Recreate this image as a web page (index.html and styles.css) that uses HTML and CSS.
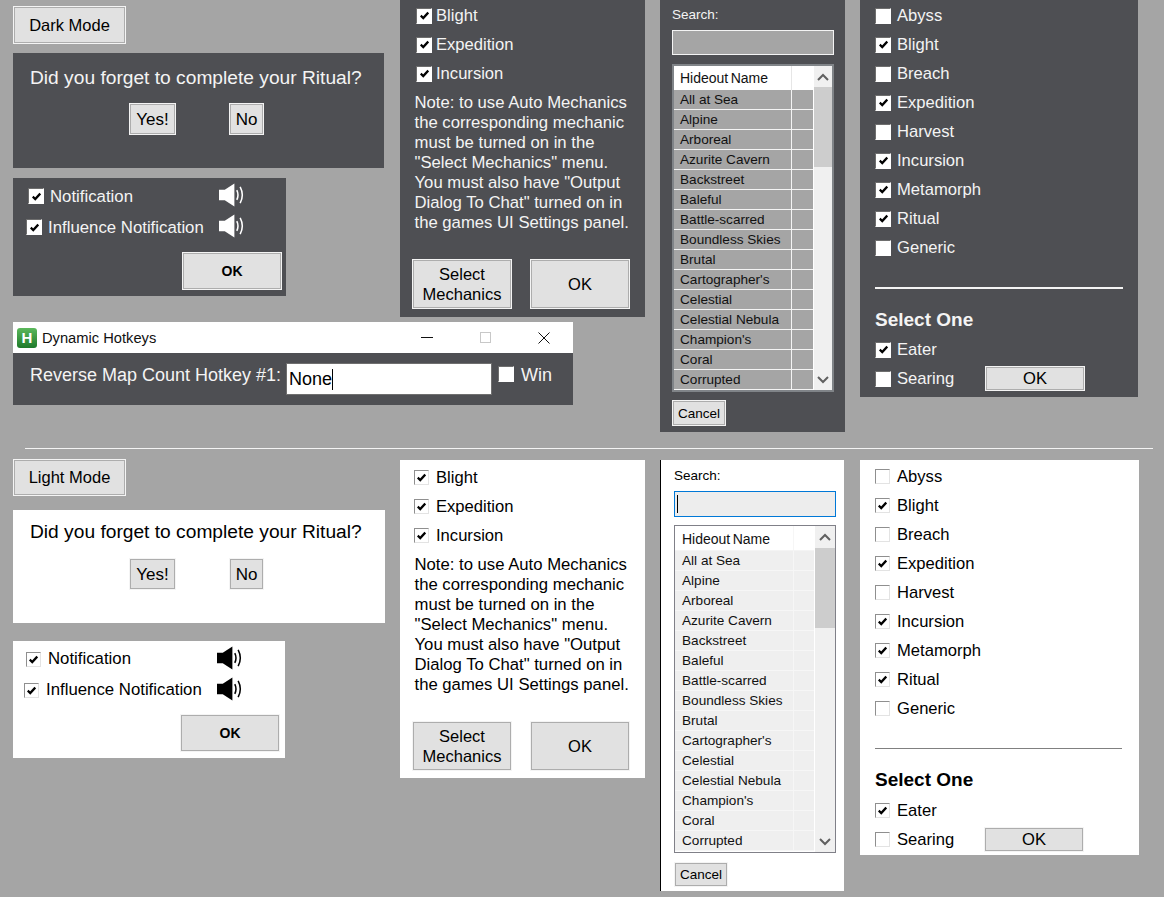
FILE: index.html
```html
<!DOCTYPE html>
<html lang="en">
<head>
<meta charset="utf-8">
<title>Dark and Light Mode</title>
<link rel="stylesheet" href="styles.css">
</head>
<body>
<svg class="defs" width="0" height="0" aria-hidden="true">
  <symbol id="tick" viewBox="0 0 10 10"><path d="M0.800 5.200 L3.600 7.800 L9.200 1.800" fill="none" stroke="currentColor" stroke-width="2.600"/></symbol>
  <symbol id="spk" viewBox="0 0 26 24"><path d="M0 6.500H6L16 0V24L6 17.500H0Z" fill="currentColor"/><path d="M18.500 7Q21 12 18.500 17M22 3.500Q26.500 12 22 20.500" fill="none" stroke="currentColor" stroke-width="1.600"/></symbol>
  <symbol id="up" viewBox="0 0 12 8"><path d="M1 7L6 2L11 7" fill="none" stroke="currentColor" stroke-width="2"/></symbol>
  <symbol id="down" viewBox="0 0 12 8"><path d="M1 1L6 6L11 1" fill="none" stroke="currentColor" stroke-width="2"/></symbol>
</svg>

<!-- DARK THEME -->
<button class="btn mode mode-dark">Dark Mode</button>

<section class="win dark ritual ritual-dark">
  <p class="ritual-q">Did you forget to complete your Ritual?</p>
  <div class="ritual-btns"><button class="btn yes">Yes!</button><button class="btn no">No</button></div>
</section>

<section class="win dark notif notif-dark">
  <div class="notif-row"><span class="box on"><svg class="tk"><use href="#tick"/></svg></span><span class="lbl">Notification</span><svg class="spk"><use href="#spk"/></svg></div>
  <div class="notif-row second"><span class="box on"><svg class="tk"><use href="#tick"/></svg></span><span class="lbl">Influence Notification</span><svg class="spk"><use href="#spk"/></svg></div>
  <button class="btn notif-ok">OK</button>
</section>

<section class="win dark hotkeys">
  <header class="titlebar">
    <span class="app-ico">H</span><span class="title">Dynamic Hotkeys</span>
    <span class="ctl"><i class="min"></i></span>
    <span class="ctl"><i class="max"></i></span>
    <span class="ctl"><svg class="x" viewBox="0 0 12 12"><path d="M.5.5L11.500 11.500M11.500.5L.5 11.500" stroke="#111" stroke-width="1" fill="none"/></svg></span>
  </header>
  <div class="hk-body">
    <span class="hk-label">Reverse Map Count Hotkey #1:</span>
    <span class="hk-input">None<i class="caret"></i></span>
    <span class="box"></span><span class="hk-win">Win</span>
  </div>
</section>

<section class="win dark mech mech-dark">
  <div class="row"><span class="box on"><svg class="tk"><use href="#tick"/></svg></span>Blight</div>
  <div class="row"><span class="box on"><svg class="tk"><use href="#tick"/></svg></span>Expedition</div>
  <div class="row"><span class="box on"><svg class="tk"><use href="#tick"/></svg></span>Incursion</div>
  <p class="note">Note: to use Auto Mechanics<br>the corresponding mechanic<br>must be turned on in the<br>"Select Mechanics" menu.<br>You must also have "Output<br>Dialog To Chat" turned on in<br>the games UI Settings panel.</p>
  <div class="mech-btns"><button class="btn big">Select<br>Mechanics</button><button class="btn big">OK</button></div>
</section>

<section class="win dark hide hide-dark">
  <div class="s-label">Search:</div>
  <div class="s-input"></div>
  <div class="list">
    <div class="cols">
      <div class="lhead"><span class="c1">Hideout Name</span><span class="c2"></span></div>
      <div class="r"><span class="c1">All at Sea</span><span class="c2"></span></div>
      <div class="r"><span class="c1">Alpine</span><span class="c2"></span></div>
      <div class="r"><span class="c1">Arboreal</span><span class="c2"></span></div>
      <div class="r"><span class="c1">Azurite Cavern</span><span class="c2"></span></div>
      <div class="r"><span class="c1">Backstreet</span><span class="c2"></span></div>
      <div class="r"><span class="c1">Baleful</span><span class="c2"></span></div>
      <div class="r"><span class="c1">Battle-scarred</span><span class="c2"></span></div>
      <div class="r"><span class="c1">Boundless Skies</span><span class="c2"></span></div>
      <div class="r"><span class="c1">Brutal</span><span class="c2"></span></div>
      <div class="r"><span class="c1">Cartographer's</span><span class="c2"></span></div>
      <div class="r"><span class="c1">Celestial</span><span class="c2"></span></div>
      <div class="r"><span class="c1">Celestial Nebula</span><span class="c2"></span></div>
      <div class="r"><span class="c1">Champion's</span><span class="c2"></span></div>
      <div class="r"><span class="c1">Coral</span><span class="c2"></span></div>
      <div class="r"><span class="c1">Corrupted</span><span class="c2"></span></div>
    </div>
    <div class="sb"><span class="sb-arrow"><svg class="arr"><use href="#up"/></svg></span><span class="thumb"></span><span class="sb-fill"></span><span class="sb-arrow"><svg class="arr"><use href="#down"/></svg></span></div>
  </div>
  <button class="btn cancel">Cancel</button>
</section>

<section class="win dark sel sel-dark">
  <div class="row"><span class="box"></span>Abyss</div>
  <div class="row"><span class="box on"><svg class="tk"><use href="#tick"/></svg></span>Blight</div>
  <div class="row"><span class="box"></span>Breach</div>
  <div class="row"><span class="box on"><svg class="tk"><use href="#tick"/></svg></span>Expedition</div>
  <div class="row"><span class="box"></span>Harvest</div>
  <div class="row"><span class="box on"><svg class="tk"><use href="#tick"/></svg></span>Incursion</div>
  <div class="row"><span class="box on"><svg class="tk"><use href="#tick"/></svg></span>Metamorph</div>
  <div class="row"><span class="box on"><svg class="tk"><use href="#tick"/></svg></span>Ritual</div>
  <div class="row"><span class="box"></span>Generic</div>
  <hr class="sep">
  <div class="sel-head">Select One</div>
  <div class="row"><span class="box on"><svg class="tk"><use href="#tick"/></svg></span>Eater</div>
  <div class="row"><span class="box"></span><span class="sear">Searing</span><button class="btn sel-ok">OK</button></div>
</section>

<hr class="divider">

<!-- LIGHT THEME -->
<button class="btn mode mode-light">Light Mode</button>

<section class="win light ritual ritual-light">
  <p class="ritual-q">Did you forget to complete your Ritual?</p>
  <div class="ritual-btns"><button class="btn yes">Yes!</button><button class="btn no">No</button></div>
</section>

<section class="win light notif notif-light">
  <div class="notif-row"><span class="box on"><svg class="tk"><use href="#tick"/></svg></span><span class="lbl">Notification</span><svg class="spk"><use href="#spk"/></svg></div>
  <div class="notif-row second"><span class="box on"><svg class="tk"><use href="#tick"/></svg></span><span class="lbl">Influence Notification</span><svg class="spk"><use href="#spk"/></svg></div>
  <button class="btn notif-ok">OK</button>
</section>

<section class="win light mech mech-light">
  <div class="row"><span class="box on"><svg class="tk"><use href="#tick"/></svg></span>Blight</div>
  <div class="row"><span class="box on"><svg class="tk"><use href="#tick"/></svg></span>Expedition</div>
  <div class="row"><span class="box on"><svg class="tk"><use href="#tick"/></svg></span>Incursion</div>
  <p class="note">Note: to use Auto Mechanics<br>the corresponding mechanic<br>must be turned on in the<br>"Select Mechanics" menu.<br>You must also have "Output<br>Dialog To Chat" turned on in<br>the games UI Settings panel.</p>
  <div class="mech-btns"><button class="btn big">Select<br>Mechanics</button><button class="btn big">OK</button></div>
</section>

<section class="win light hide hide-light">
  <div class="s-label">Search:</div>
  <div class="s-input"><i class="caret"></i></div>
  <div class="list">
    <div class="cols">
      <div class="lhead"><span class="c1">Hideout Name</span><span class="c2"></span></div>
      <div class="r"><span class="c1">All at Sea</span><span class="c2"></span></div>
      <div class="r"><span class="c1">Alpine</span><span class="c2"></span></div>
      <div class="r"><span class="c1">Arboreal</span><span class="c2"></span></div>
      <div class="r"><span class="c1">Azurite Cavern</span><span class="c2"></span></div>
      <div class="r"><span class="c1">Backstreet</span><span class="c2"></span></div>
      <div class="r"><span class="c1">Baleful</span><span class="c2"></span></div>
      <div class="r"><span class="c1">Battle-scarred</span><span class="c2"></span></div>
      <div class="r"><span class="c1">Boundless Skies</span><span class="c2"></span></div>
      <div class="r"><span class="c1">Brutal</span><span class="c2"></span></div>
      <div class="r"><span class="c1">Cartographer's</span><span class="c2"></span></div>
      <div class="r"><span class="c1">Celestial</span><span class="c2"></span></div>
      <div class="r"><span class="c1">Celestial Nebula</span><span class="c2"></span></div>
      <div class="r"><span class="c1">Champion's</span><span class="c2"></span></div>
      <div class="r"><span class="c1">Coral</span><span class="c2"></span></div>
      <div class="r"><span class="c1">Corrupted</span><span class="c2"></span></div>
    </div>
    <div class="sb"><span class="sb-arrow"><svg class="arr"><use href="#up"/></svg></span><span class="thumb"></span><span class="sb-fill"></span><span class="sb-arrow"><svg class="arr"><use href="#down"/></svg></span></div>
  </div>
  <button class="btn cancel">Cancel</button>
</section>

<section class="win light sel sel-light">
  <div class="row"><span class="box"></span>Abyss</div>
  <div class="row"><span class="box on"><svg class="tk"><use href="#tick"/></svg></span>Blight</div>
  <div class="row"><span class="box"></span>Breach</div>
  <div class="row"><span class="box on"><svg class="tk"><use href="#tick"/></svg></span>Expedition</div>
  <div class="row"><span class="box"></span>Harvest</div>
  <div class="row"><span class="box on"><svg class="tk"><use href="#tick"/></svg></span>Incursion</div>
  <div class="row"><span class="box on"><svg class="tk"><use href="#tick"/></svg></span>Metamorph</div>
  <div class="row"><span class="box on"><svg class="tk"><use href="#tick"/></svg></span>Ritual</div>
  <div class="row"><span class="box"></span>Generic</div>
  <hr class="sep">
  <div class="sel-head">Select One</div>
  <div class="row"><span class="box on"><svg class="tk"><use href="#tick"/></svg></span>Eater</div>
  <div class="row"><span class="box"></span><span class="sear">Searing</span><button class="btn sel-ok">OK</button></div>
</section>
</body>
</html>
```

FILE: styles.css
```css
* { box-sizing: border-box; }
html, body { margin: 0; height: 100%; overflow: hidden; }
body {
  position: relative;
  width: 1164px;
  height: 897px;
  background: #a5a5a5;
  font-family: "Liberation Sans", Arial, sans-serif;
  font-size: 16px;
  color: #000;
}
.defs { position: absolute; }
p { margin: 0; }

/* free-floating windows on the canvas */
.win { position: absolute; }
.dark { background: #4e4f53; color: #f4f4f4; }
.light { background: #fff; color: #000; }

.ritual-dark { left: 13px; top: 53px; width: 371px; height: 115px; }
.ritual-light { left: 13px; top: 510px; width: 372px; height: 113px; }
.notif-dark { left: 13px; top: 178px; width: 273px; height: 118px; }
.notif-light { left: 13px; top: 641px; width: 272px; height: 117px; }
.hotkeys { left: 13px; top: 322px; width: 560px; height: 83px; }
.mech-dark { left: 400px; top: 0; width: 245px; height: 317px; padding-top: 1px; }
.mech-light { left: 400px; top: 460px; width: 245px; height: 318px; padding-top: 3px; }
.hide-dark { left: 660px; top: 0; width: 185px; height: 432px; padding: 5px 11px 0 12px; }
.hide-light { left: 660px; top: 460px; width: 184px; height: 431px; padding: 6px 7px 0 13px; border-left: 1px solid #000; }
.sel-dark { left: 860px; top: 0; width: 278px; height: 397px; padding-top: 1px; }
.sel-light { left: 860px; top: 460px; width: 279px; height: 395px; padding-top: 2px; }

/* buttons */
.btn {
  display: block;
  margin: 0;
  padding: 0;
  font: inherit;
  color: #000;
  background: #e1e1e1;
  border: 1px solid #f4f4f4;
  box-shadow: inset 0 0 0 1px #adadad;
}
.mode { position: absolute; left: 13px; width: 113px; font-size: 16.500px; }
.mode-dark { top: 6px; height: 38px; }
.mode-light { top: 459px; height: 37px; }

/* checkbox */
.box {
  flex: none;
  display: flex;
  align-items: center;
  justify-content: center;
  width: 15px;
  height: 15px;
  background: #fff;
  border: 1px solid #8f8f8f;
  border-right-color: #e3e3e3;
  border-bottom-color: #e3e3e3;
  color: #000;
}
.tk { width: 9px; height: 9px; }
.dark .box { width: 16px; height: 16px; border-color: #6e6e6e #fff #fff #6e6e6e; }

/* ritual */
.ritual-q { font-size: 19.200px; line-height: 24px; padding: 13px 0 0 17px; white-space: nowrap; }
.ritual-btns { display: flex; gap: 53px; margin: 13px 0 0 116px; font-size: 17px; }
.yes { width: 47px; height: 32px; padding-top: 2px; }
.no { width: 35px; height: 32px; padding-top: 2px; }
.ritual-light .ritual-q { padding-top: 10px; }
.ritual-light .ritual-btns { margin-top: 14px; }

/* notifications */
.notif-row { display: flex; align-items: center; height: 31px; padding: 5px 42px 0 15px; font-size: 16.800px; }
.notif-row.second { padding-left: 13px; }
.notif-row .lbl { flex: 1; margin: 2px 0 0 6px; white-space: nowrap; }
.spk { width: 25px; height: 24px; flex: none; margin-top: -3px; color: #fff; }
.light .spk { color: #000; }
.notif-ok { width: 100px; height: 38px; margin: 12px 0 0 169px; font-size: 14px; font-weight: 700; }
.notif-light .notif-ok { margin: 11px 0 0 167px; }
.notif-light .notif-row { padding: 5px 43px 0 13px; }
.notif-light .notif-row.second { padding-left: 11px; }
.notif-light .lbl { margin: 0 0 0 7px; }

/* hotkeys */
.titlebar { display: flex; align-items: center; height: 31px; background: #fff; color: #111; font-size: 14.700px; padding-left: 4px; }
.app-ico {
  width: 20px; height: 20px; margin-right: 5px; border-radius: 3px;
  display: flex; align-items: center; justify-content: center;
  background: linear-gradient(#5cb85c, #1e7a2a);
  color: #fff; font-weight: 700; font-size: 15px;
}
.title { flex: 1; }
.ctl { width: 58.500px; height: 31px; display: flex; align-items: center; justify-content: center; flex: none; }
.min { width: 12px; height: 1px; background: #111; }
.max { width: 11px; height: 11px; border: 1px solid #c8c8c8; }
.x { width: 12px; height: 12px; }
.hk-body { display: flex; align-items: flex-start; height: 52px; padding: 10px 0 0 17px; font-size: 18px; line-height: 22px; }
.hk-label { width: 256px; margin-top: 1px; white-space: nowrap; }
.hk-input { display: flex; align-items: center; width: 206px; height: 32px; padding: 0 0 0 2px; background: #fff; color: #000; border: 1px solid #6f6f6f; }
.caret { display: inline-block; width: 1px; height: 21px; background: #000; }
.hk-body .box { margin: 3px 7px 0 6px; }
.hk-win { margin-top: 1px; }

/* mechanics */
.row { display: flex; align-items: center; gap: 6px; height: 29px; padding-left: 15px; font-size: 16.600px; }
.mech-dark .row { padding-left: 16px; gap: 4px; }
.mech-light .row { padding-left: 14px; gap: 7px; }
.sel-light .row { gap: 7px; }
.note { margin-top: 5px; padding-left: 14.500px; font-size: 16.700px; line-height: 20px; white-space: nowrap; }
.mech-btns { display: flex; gap: 18px; margin: 26px 0 0 12px; }
.big { width: 100px; height: 50px; font-size: 16.500px; line-height: 20px; }

/* hideout list */
.s-label { font-size: 13.500px; height: 19px; line-height: 19px; }
.s-input { height: 25px; margin-top: 6px; width: 162px; background: #a5a5a5; border: 1px solid #f4f4f4; }
.hide-light .s-input { height: 26px; margin-top: 6px; background: #ededed; border-color: #0078d7; padding: 3px 0 0 2px; display: flex; }
.hide-light .s-input .caret { height: 18px; }
.list { display: flex; width: 162px; height: 328px; margin-top: 9px; border: 2px solid #808488; background: #fff; color: #111; font-size: 13.600px; overflow: hidden; }
.hide-light .list { margin-top: 8px; border: 1px solid #808088; }
.cols { width: 139px; flex: none; }
.lhead { display: flex; height: 24px; background: #fff; }
.lhead .c1, .lhead .c2 { line-height: 24px; }
.lhead .c1 { word-spacing: -1.500px; border-right: 1px solid #e6e6e6; font-size: 14px; }
.r { display: flex; height: 20px; line-height: 20px; background: #a5a5a5; border-bottom: 1px solid #f4f4f4; }
.c1 { display: block; width: 118px; padding-left: 6px; border-right: 1px solid #f4f4f4; white-space: nowrap; }
.c2 { display: block; flex: 1; }
.sb { flex: 1; display: flex; flex-direction: column; background: #f0f0f0; margin-left: 1px; }
.sb-arrow { height: 21px; display: flex; align-items: center; justify-content: center; color: #606060; flex: none; }
.arr { width: 12px; height: 8px; }
.thumb { height: 80px; background: #cdcdcd; flex: none; }
.sb-fill { flex: 1; background: #f0f0f0; }
.hide-light .lhead { height: 25px; border-bottom: 1px solid #f4f4f4; }
.hide-light .lhead .c1 { line-height: 26px; }
.hide-light .c1 { width: 119px; padding-left: 7px; border-right-color: #f6f6f6; }
.hide-light .r { background: #efefef; border-bottom-color: #f6f6f6; }
.hide-light .cols { width: 140px; border-right: 1px solid #fff; }
.hide-light .sb-arrow:first-child { height: 22px; }
.hide-light .sb { margin-left: 0; }
.cancel { width: 54px; height: 26px; margin-top: 8px; font-size: 13.500px; }
.hide-light .cancel { height: 25px; margin-top: 9px; }

/* select panel */
.sep { margin: 25px 15px 0 15px; border: 0; height: 2px; background: #f4f4f4; }
.sel-light .sep { height: 1px; margin: 25px 17px 0 15px; background: #808080; }
.sel-head { margin-top: 22px; padding-left: 15px; font-size: 19px; font-weight: 700; line-height: 18px; height: 24px; }
.sel-light .sel-head { height: 25px; }
.sear { width: 88px; }
.sel-ok { width: 100px; height: 25px; margin-left: -6px; font-size: 16.600px; }
.sel-light .sel-ok { margin-left: -8px; }

.divider { position: absolute; left: 25px; top: 448px; width: 1128px; height: 1px; margin: 0; border: 0; background: #f4f4f4; }
```
